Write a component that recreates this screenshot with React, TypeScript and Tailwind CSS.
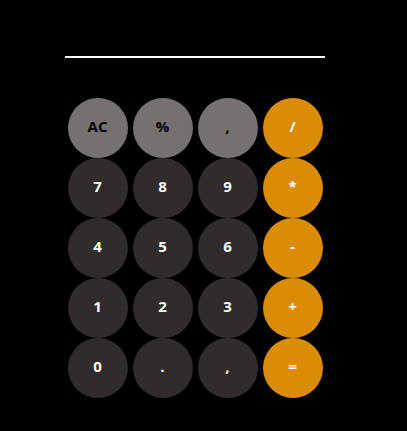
import React from 'react';

type Key = { label: string; kind: 'fn' | 'num' | 'op' };

const keys: Key[] = [
  { label: 'AC', kind: 'fn' },
  { label: '%', kind: 'fn' },
  { label: ',', kind: 'fn' },
  { label: '/', kind: 'op' },
  { label: '7', kind: 'num' },
  { label: '8', kind: 'num' },
  { label: '9', kind: 'num' },
  { label: '*', kind: 'op' },
  { label: '4', kind: 'num' },
  { label: '5', kind: 'num' },
  { label: '6', kind: 'num' },
  { label: '-', kind: 'op' },
  { label: '1', kind: 'num' },
  { label: '2', kind: 'num' },
  { label: '3', kind: 'num' },
  { label: '+', kind: 'op' },
  { label: '0', kind: 'num' },
  { label: '.', kind: 'num' },
  { label: ',', kind: 'num' },
  { label: '=', kind: 'op' },
];

const styles = {
  fn: 'bg-[#757170] text-black',
  num: 'bg-[#302c2c] text-white',
  op: 'bg-[#d98c04] text-white',
};

export default function App() {
  return (
    <div className="min-h-[431px] bg-black font-['Open_Sans',sans-serif]">
      <div className="ml-[65px] w-[260px] pt-[56px]">
        {/* Display */}
        <div className="h-[2px] bg-white" />

        {/* Keypad */}
        <div className="mt-[40px] grid grid-cols-[repeat(4,65px)]">
          {keys.map((k, i) => (
            <div key={i} className="flex justify-center">
              <button
                className={`w-[60px] h-[60px] rounded-full flex items-center justify-center pb-[3px] text-[15px] font-bold ${styles[k.kind]}`}
              >
                {k.label}
              </button>
            </div>
          ))}
        </div>
      </div>
    </div>
  );
}
